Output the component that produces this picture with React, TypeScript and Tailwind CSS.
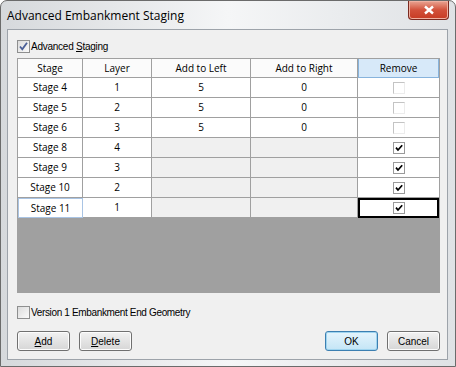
import React from 'react'

type Row = {
  stage: string
  layer: string
  left: string
  right: string
  remove: boolean
}

const rows: Row[] = [
  { stage: 'Stage 4', layer: '1', left: '5', right: '0', remove: false },
  { stage: 'Stage 5', layer: '2', left: '5', right: '0', remove: false },
  { stage: 'Stage 6', layer: '3', left: '5', right: '0', remove: false },
  { stage: 'Stage 8', layer: '4', left: '', right: '', remove: true },
  { stage: 'Stage 9', layer: '3', left: '', right: '', remove: true },
  { stage: 'Stage 10', layer: '2', left: '', right: '', remove: true },
  { stage: 'Stage 11', layer: '1', left: '', right: '', remove: true },
]

const cols = 'grid grid-cols-[65px_69px_99px_107px_1fr]'
const sans = { fontFamily: '"Liberation Sans", Arial, sans-serif' }

function WinCheck({ checked }: { checked: boolean }) {
  return (
    <span className="relative inline-flex h-[13px] w-[13px] shrink-0 items-center justify-center border border-[#8e8f8f] bg-gradient-to-br from-[#dcdcdc] to-[#fafafa]">
      {checked && (
        <svg width="11" height="11" viewBox="0 0 11 11" className="absolute">
          <path d="M2 5.5 L4.3 8.3 L9 1.8" fill="none" stroke="#4a5f97" strokeWidth="1.8" />
        </svg>
      )}
    </span>
  )
}

function CellCheck({ checked }: { checked: boolean }) {
  return (
    <span
      className={
        'relative inline-flex h-[12px] w-[12px] items-center justify-center border bg-white ' +
        (checked ? 'border-[#9a9a9a]' : 'border-[#c4c4c4] border-r-[#ececec] border-b-[#ececec]')
      }
    >
      {checked && (
        <svg width="10" height="10" viewBox="0 0 10 10" className="absolute">
          <path d="M2 4.6 L4 7 L8.2 2.2" fill="none" stroke="#000" strokeWidth="1.7" />
        </svg>
      )}
    </span>
  )
}

function Button({ children, primary }: { children: React.ReactNode; primary?: boolean }) {
  return (
    <button
      style={sans}
      className={
        'flex h-[20px] w-[53px] items-center justify-center rounded-[3px] border text-[10px] text-black ' +
        (primary
          ? 'border-[#3c7fb1] bg-gradient-to-b from-[#e5f4fc] to-[#c4e5f6] shadow-[inset_0_0_0_1px_#9fd4ef]'
          : 'border-[#707070] bg-gradient-to-b from-[#f2f2f2] to-[#d6d6d6] shadow-[inset_0_0_0_1px_#fcfcfc]')
      }
    >
      {children}
    </button>
  )
}

export default function App() {
  return (
    <div
      className="flex h-[367px] w-[456px] flex-col rounded-t-[7px] border border-[#6b6b6b] bg-gradient-to-r from-[#d6d9dc] via-[#f5f6f7] to-[#dfe2e5] text-[10px] text-black"
      style={{ fontFamily: '"Open Sans", "Noto Sans", sans-serif' }}
    >
      {/* Title bar */}
      <div className="flex h-[28px] items-start justify-between pl-[6px] pr-[6px]">
        <span className="mt-[6px] text-[12px] text-black">Advanced Embankment Staging</span>
        <div className="flex h-[19px] w-[41px] items-center justify-center rounded-b-[4px] border border-t-0 border-[#7a2a20] bg-gradient-to-b from-[#e8a493] via-[#d2503a] to-[#c73a22] shadow-[inset_0_0_0_1px_#f0b0a0]">
          <svg width="12" height="10" viewBox="0 0 12 10">
            <path d="M2 1.5 L10 8.5 M10 1.5 L2 8.5" stroke="#fff" strokeWidth="2.4" />
          </svg>
        </div>
      </div>

      {/* Client area */}
      <div className="mb-[6px] ml-[6px] mr-[7px] flex flex-1 flex-col border border-[#9da3aa] bg-[#f0f0f0] pl-[9px] pr-[7px]">
        <label className="mt-[10px] flex h-[13px] items-center gap-[1px]">
          <WinCheck checked />
          <span style={sans} className="text-[10px] tracking-[-0.25px]">
            Advanced <span className="underline">S</span>taging
          </span>
        </label>

        {/* Grid */}
        <div className="mt-[5px] flex h-[235px] flex-col border border-[#a0a0a0] bg-[#a0a0a0]">
          <div className={cols + ' h-[19px] bg-white'}>
            {['Stage', 'Layer', 'Add to Left', 'Add to Right'].map((h) => (
              <div key={h} className="flex items-center justify-center border-b border-r border-[#a0a0a0] bg-[#fbfbfb]">
                {h}
              </div>
            ))}
            <div className="flex items-center justify-center border border-t-0 border-[#87b3dc] bg-[#d7e9f9]">Remove</div>
          </div>
          {rows.map((r, i) => {
            const last = i === rows.length - 1
            const empty = r.left === ''
            return (
              <div key={r.stage} className={cols + ' h-[20px]'}>
                <div
                  className={
                    'flex items-center justify-center bg-white ' +
                    (last ? 'border border-[#a9c4e4]' : 'border-b border-r border-[#a0a0a0]')
                  }
                >
                  {r.stage}
                </div>
                <div className="flex items-center justify-center border-b border-r border-[#a0a0a0] bg-white">{r.layer}</div>
                <div className={'flex items-center justify-center border-b border-r border-[#a0a0a0] ' + (empty ? 'bg-[#f0f0f0]' : 'bg-white')}>
                  {r.left}
                </div>
                <div className={'flex items-center justify-center border-b border-r border-[#a0a0a0] ' + (empty ? 'bg-[#f0f0f0]' : 'bg-white')}>
                  {r.right}
                </div>
                <div
                  className={
                    'flex items-center justify-center bg-white ' +
                    (last ? 'border-2 border-black' : 'border-b border-[#a0a0a0]')
                  }
                >
                  <CellCheck checked={r.remove} />
                </div>
              </div>
            )
          })}
          <div className="flex-1 bg-[#a0a0a0]" />
        </div>

        <label className="mt-[13px] flex h-[13px] items-center gap-[1px]">
          <WinCheck checked={false} />
          <span style={sans} className="text-[10px] tracking-[-0.35px]">Version 1 Embankment End Geometry</span>
        </label>

        <div className="mt-[12px] flex items-center">
          <Button>
            <span className="underline">A</span>dd
          </Button>
          <div className="ml-[9px]">
            <Button>
              <span className="underline">D</span>elete
            </Button>
          </div>
          <div className="flex-1" />
          <Button primary>OK</Button>
          <div className="ml-[9px]">
            <Button>Cancel</Button>
          </div>
        </div>
      </div>
    </div>
  )
}
